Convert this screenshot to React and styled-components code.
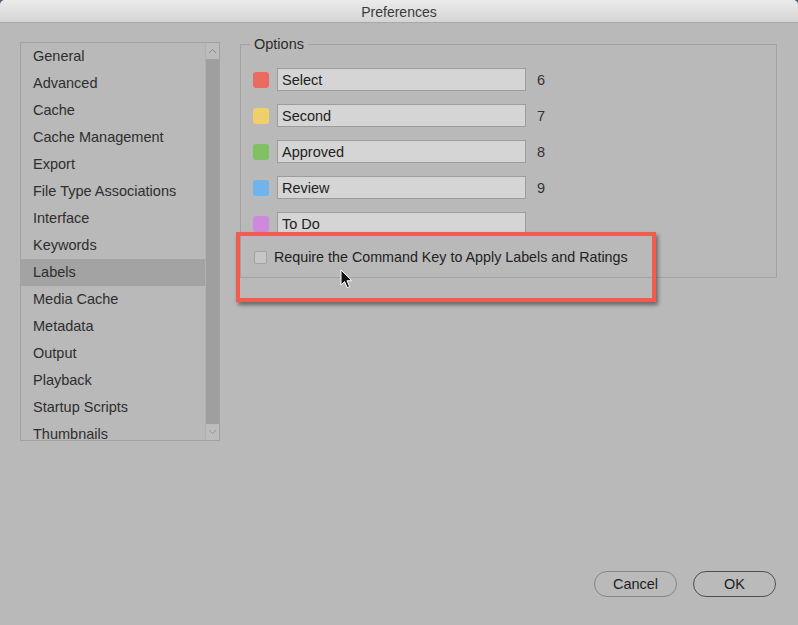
import React from "react";
import styled, { createGlobalStyle } from "styled-components";

const Global = createGlobalStyle`
  html, body {
    margin: 0;
    padding: 0;
    background: #4d5b6e;
  }
  * {
    box-sizing: border-box;
  }
`;

const Window = styled.div`
  width: 798px;
  height: 625px;
  display: flex;
  flex-direction: column;
  background: #b9b9b9;
  border-radius: 5px 5px 0 0;
  overflow: hidden;
  font-family: "Liberation Sans", Arial, sans-serif;
  color: #2b2b2b;
`;

const TitleBar = styled.div`
  height: 23px;
  flex: none;
  display: flex;
  align-items: center;
  justify-content: center;
  background: linear-gradient(#ebebeb, #d5d5d5);
  border-bottom: 1px solid #a9a9a9;
  font-size: 14px;
  color: #3a3a3a;
  padding-top: 1px;
`;

const Content = styled.div`
  display: flex;
  gap: 20px;
  padding: 13px 21px 0 20px;
`;

const Sidebar = styled.div`
  width: 200px;
  height: 399px;
  margin-top: 6px;
  border: 1px solid #a2a2a2;
  display: flex;
  flex: none;
`;

const List = styled.ul`
  flex: 1;
  margin: 0;
  padding: 0;
  list-style: none;
  overflow: hidden;
`;

const Item = styled.li`
  height: 27px;
  display: flex;
  align-items: center;
  padding-left: 12px;
  padding-bottom: 1px;
  font-size: 14.5px;
  color: #2e2e2e;
  background: ${(p) => (p.$active ? "#a3a3a3" : "transparent")};
`;

const Scrollbar = styled.div`
  width: 14px;
  display: flex;
  flex-direction: column;
  background: #bcbcbc;
  border-left: 1px solid #b0b0b0;
`;

const ScrollArrow = styled.div`
  height: 16px;
  display: flex;
  align-items: center;
  justify-content: center;
  flex: none;
`;

const ScrollThumb = styled.div`
  flex: 1;
  background: #9f9f9f;
`;

const Main = styled.div`
  flex: 1;
  position: relative;
`;

const Fieldset = styled.fieldset`
  margin: 0;
  padding: 16px 12px 10px 12px;
  border: 1px solid #a3a3a3;
  height: 242px;
`;

const Legend = styled.legend`
  padding: 0 4px;
  margin-left: -3px;
  font-size: 14.5px;
  line-height: 16px;
  color: #2b2b2b;
`;

const Rows = styled.div`
  display: flex;
  flex-direction: column;
  gap: 13px;
`;

const Row = styled.div`
  display: flex;
  align-items: center;
  height: 23px;
`;

const Swatch = styled.div`
  width: 16px;
  height: 16px;
  border-radius: 3px;
  background: ${(p) => p.$color};
  margin-right: 8px;
`;

const LabelInput = styled.div`
  width: 249px;
  height: 23px;
  background: #d5d5d5;
  border: 1px solid #9c9c9c;
  display: flex;
  align-items: center;
  padding-left: 4px;
  font-size: 14.5px;
  color: #222;
`;

const Shortcut = styled.span`
  margin-left: 11px;
  font-size: 14.5px;
  color: #333;
`;

const CheckRow = styled.label`
  display: flex;
  align-items: center;
  gap: 7px;
  margin-top: 13px;
  height: 18px;
  font-size: 14.3px;
  color: #222;
`;

const Checkbox = styled.span`
  width: 13px;
  height: 13px;
  border: 1px solid #a3a3a3;
  border-radius: 2px;
  background: #c6c6c6;
  margin-left: 1px;
`;

const Highlight = styled.div`
  position: absolute;
  left: -4px;
  top: 196px;
  width: 420px;
  height: 70px;
  border: 4px solid #f25b4f;
  box-shadow: 2px 3px 4px rgba(0, 0, 0, 0.45);
  pointer-events: none;
`;

const Cursor = styled.svg`
  position: absolute;
  left: 100px;
  top: 233px;
`;

const Footer = styled.div`
  margin-top: auto;
  display: flex;
  justify-content: flex-end;
  gap: 16px;
  padding: 0 22px 28px 0;
`;

const Button = styled.button`
  width: 83px;
  height: 26px;
  border-radius: 13px;
  border: 1px solid ${(p) => (p.$primary ? "#4e4e4e" : "#858585")};
  background: #bababa;
  font-family: "Liberation Sans", Arial, sans-serif;
  font-size: 14.5px;
  color: #1e1e1e;
  padding: 0;
`;

const categories = [
  "General",
  "Advanced",
  "Cache",
  "Cache Management",
  "Export",
  "File Type Associations",
  "Interface",
  "Keywords",
  "Labels",
  "Media Cache",
  "Metadata",
  "Output",
  "Playback",
  "Startup Scripts",
  "Thumbnails",
];

const labels = [
  { color: "#ec6a62", name: "Select", key: "6" },
  { color: "#eecf6a", name: "Second", key: "7" },
  { color: "#7fc163", name: "Approved", key: "8" },
  { color: "#6fb4ec", name: "Review", key: "9" },
  { color: "#cd89dd", name: "To Do", key: "" },
];

export default function App() {
  return (
    <Window>
      <Global />
      <TitleBar>Preferences</TitleBar>
      <Content>
        <Sidebar>
          <List>
            {categories.map((c) => (
              <Item key={c} $active={c === "Labels"}>
                {c}
              </Item>
            ))}
          </List>
          <Scrollbar>
            <ScrollArrow>
              <svg width="9" height="6" viewBox="0 0 9 6">
                <path d="M1 5 L4.5 1.5 L8 5" fill="none" stroke="#8f8f8f" strokeWidth="1" />
              </svg>
            </ScrollArrow>
            <ScrollThumb />
            <ScrollArrow>
              <svg width="9" height="6" viewBox="0 0 9 6">
                <path d="M1 1 L4.5 4.5 L8 1" fill="none" stroke="#9a9a9a" strokeWidth="1" />
              </svg>
            </ScrollArrow>
          </Scrollbar>
        </Sidebar>
        <Main>
          <Fieldset>
            <Legend>Options</Legend>
            <Rows>
              {labels.map((l) => (
                <Row key={l.name}>
                  <Swatch $color={l.color} />
                  <LabelInput>{l.name}</LabelInput>
                  <Shortcut>{l.key}</Shortcut>
                </Row>
              ))}
            </Rows>
            <CheckRow>
              <Checkbox />
              Require the Command Key to Apply Labels and Ratings
            </CheckRow>
          </Fieldset>
          <Highlight />
          <Cursor width="13" height="20" viewBox="0 0 13 20">
            <path
              d="M1 1 L1 16 L4.6 12.6 L7.2 18.6 L9.6 17.6 L7 11.7 L11.8 11.7 Z"
              fill="#111"
              stroke="#fff"
              strokeWidth="1"
              strokeLinejoin="round"
            />
          </Cursor>
        </Main>
      </Content>
      <Footer>
        <Button>Cancel</Button>
        <Button $primary>OK</Button>
      </Footer>
    </Window>
  );
}
